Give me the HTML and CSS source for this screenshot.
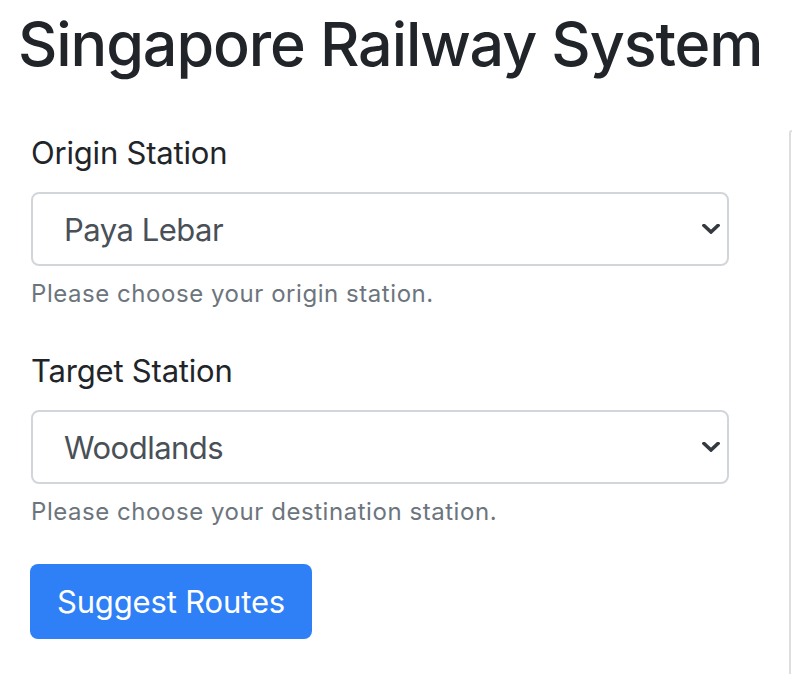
FILE: index.html
```html
<!DOCTYPE html>
<html lang="en">
<head>
<meta charset="utf-8">
<title>Singapore Railway System</title>
<link rel="stylesheet" href="styles.css">
</head>
<body>
<div class="page">
  <h1 class="title">Singapore Railway System</h1>
  <div class="row">
    <form class="form-col">
      <div class="field">
        <label class="label" for="origin">Origin Station</label>
        <div class="select-wrap">
          <select id="origin" class="select"><option>Paya Lebar</option></select>
          <svg class="chevron" width="18" height="10" viewBox="0 0 18 10"><path d="M2 1.5 9 8 16 1.5" fill="none" stroke="#343a40" stroke-width="3.6" stroke-linecap="square" stroke-linejoin="miter"/></svg>
        </div>
        <div class="help">Please choose your origin station.</div>
      </div>
      <div class="field field-2">
        <label class="label" for="target">Target Station</label>
        <div class="select-wrap">
          <select id="target" class="select"><option>Woodlands</option></select>
          <svg class="chevron" width="18" height="10" viewBox="0 0 18 10"><path d="M2 1.5 9 8 16 1.5" fill="none" stroke="#343a40" stroke-width="3.6" stroke-linecap="square" stroke-linejoin="miter"/></svg>
        </div>
        <div class="help">Please choose your destination station.</div>
      </div>
      <button type="button" class="btn">Suggest Routes</button>
    </form>
    <div class="side-card"></div>
  </div>
</div>
</body>
</html>
```
FILE: styles.css
```css
html, body {
  margin: 0;
  padding: 0;
  background: #fff;
  overflow: hidden;
}
body {
  font-family: Inter, "Liberation Sans", Arial, sans-serif;
  color: #212529;
  width: 792px;
  height: 674px;
}
.page {
  padding-left: 18px;
}
.title {
  margin: 0;
  padding-top: 4px;
  font-size: 61px;
  line-height: 80px;
  font-weight: 500;
  letter-spacing: -1.1px;
  color: #212529;
  white-space: nowrap;
}
.row {
  display: flex;
  align-items: flex-start;
  padding-left: 13px;
  margin-top: 45px;
}
.form-col {
  width: 698px;
  flex: none;
  margin: 0;
}
.field {
  display: flex;
  flex-direction: column;
}
.field-2 {
  margin-top: 35px;
}
.label {
  font-size: 31px;
  line-height: 48px;
  letter-spacing: -0.2px;
  margin-bottom: 15px;
  color: #212529;
}
.select-wrap {
  position: relative;
  height: 74px;
}
.select {
  appearance: none;
  -webkit-appearance: none;
  width: 100%;
  height: 74px;
  box-sizing: border-box;
  border: 2px solid #d2d6da;
  border-radius: 8px;
  background: #fff;
  padding: 0 60px 0 31px;
  font-family: Inter, "Liberation Sans", Arial, sans-serif;
  font-size: 31px;
  letter-spacing: -0.5px;
  color: #495057;
  outline: none;
}
.chevron {
  position: absolute;
  right: 9px;
  top: 32px;
  pointer-events: none;
}
.help {
  margin-top: 10px;
  font-size: 24px;
  line-height: 36px;
  letter-spacing: 0.55px;
  color: #6c757d;
}
.btn {
  margin-top: 34px;
  display: block;
  width: 282px;
  height: 75px;
  margin-left: -1px;
  border: none;
  border-radius: 8px;
  background: #2f80f6;
  color: #fff;
  font-family: Inter, "Liberation Sans", Arial, sans-serif;
  font-size: 31px;
  letter-spacing: -0.15px;
  padding: 0;
}
.side-card {
  flex: 1;
  min-width: 0;
  margin-left: 60px;
  margin-top: 1px;
  height: 544px;
  box-sizing: border-box;
  border-left: 2px solid #dedede;
  border-top: 2px solid #dedede;
  border-top-left-radius: 8px;
}
```
